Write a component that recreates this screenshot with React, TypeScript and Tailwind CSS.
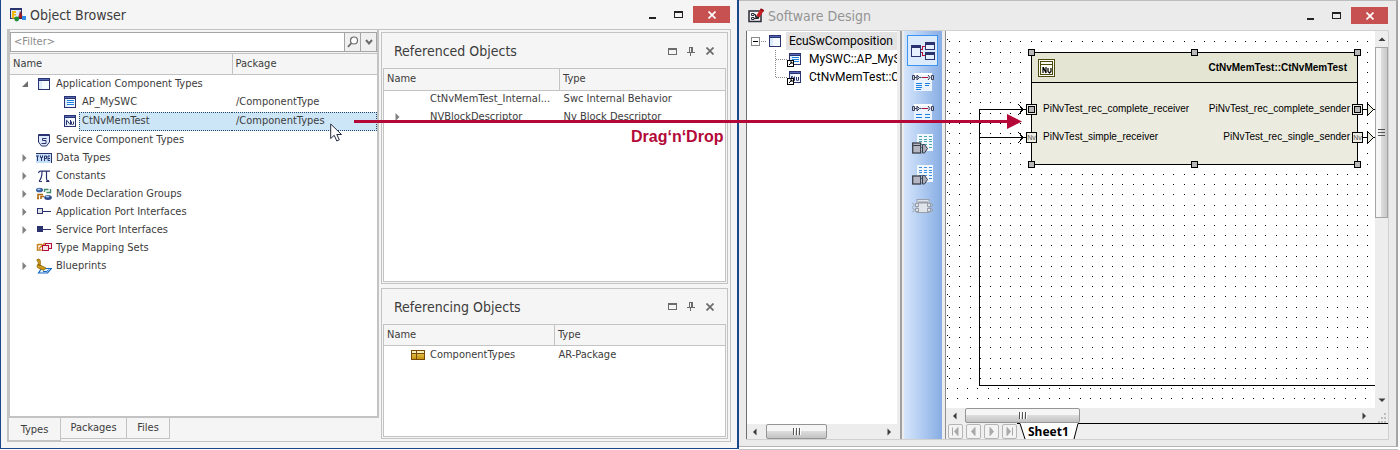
import React from 'react';

type IconProps = { className?: string };

const NAVY = '#2b3270';

function Svg({ w, h, children, className }: { w: number; h: number; children: React.ReactNode; className?: string }) {
  return (
    <svg width={w} height={h} viewBox={`0 0 ${w} ${h}`} className={`shrink-0 ${className ?? ''}`} aria-hidden="true">
      {children}
    </svg>
  );
}

function WindowShape() {
  return (
    <g shapeRendering="crispEdges">
      <rect x="2" y="2" width="12" height="12" fill={NAVY} />
      <rect x="3" y="5" width="10" height="8" fill="#f4f9ff" />
      <rect x="3" y="3" width="10" height="1" fill="#5468b8" />
      <rect x="3" y="5" width="3" height="8" fill="#dcebfb" />
    </g>
  );
}

function WindowIcon() {
  return (
    <Svg w={16} h={16}>
      <WindowShape />
    </Svg>
  );
}

function ListWindowIcon() {
  return (
    <Svg w={16} h={16}>
      <WindowShape />
      <path d="M5 6.500h7M5 8.500h7M5 10.500h7" stroke="#1d7fe0" shapeRendering="crispEdges" />
    </Svg>
  );
}

function NvWindowIcon() {
  return (
    <Svg w={16} h={16}>
      <WindowShape />
      <path d="M4.500 12V7.500h.5l3 4h.5V7M9.500 8.500v2.500l1 1 1-1V8.500" stroke={NAVY} fill="none" />
    </Svg>
  );
}

function ShieldIcon() {
  return (
    <Svg w={16} h={16}>
      <path d="M2.500 2.500h11v7.500l-3 4h-5l-3-4z" fill="#dbe9fb" stroke={NAVY} />
      <path d="M3 3.500h10" stroke={NAVY} />
      <path d="M10.500 6.500h-4v2h3.500v3H5.500" stroke={NAVY} fill="none" />
    </Svg>
  );
}

function TypeIcon() {
  return (
    <Svg w={16} h={16}>
      <g shapeRendering="crispEdges">
        <rect x="0" y="4" width="16" height="9" fill="#c4e0f9" />
        <path d="M0 3.500h16M15.500 3v10" stroke={NAVY} fill="none" />
      </g>
      <path
        d="M0 6h3M1.500 6v5M4.500 5.500v2h2v-2M5.500 7.500V11M8.500 11V6h2v2.500h-2M14 6h-2v4.500h2M12 8.500h2"
        stroke={NAVY}
        fill="none"
      />
    </Svg>
  );
}

function PiIcon() {
  return (
    <Svg w={16} h={16}>
      <path d="M2.500 5q.5-1.800 2-1.800h9.500M6 3.500c0 5-.5 7.500-3 9.500M10.500 3.500v7c0 2 1 2.500 2.500 2" stroke={NAVY} strokeWidth="1.200" fill="none" />
      <path d="M3 13.500h3M10 13.500h3.500" stroke={NAVY} />
    </Svg>
  );
}

function ModeIcon() {
  return (
    <Svg w={16} h={16}>
      <ellipse cx="3.500" cy="4" rx="3.500" ry="2.300" fill="#3a5f9e" />
      <ellipse cx="3" cy="3.300" rx="1.800" ry=".9" fill="#a9c4ea" />
      <path d="M8.500 6V3.500h4M10.500 6.500h4V3" stroke="#3f8a68" strokeWidth="1.400" fill="none" />
      <path d="M2 13V8.500h5M5 13V10.500h3M1 12.500h2" stroke="#b36a12" strokeWidth="1.600" fill="none" />
      <ellipse cx="12" cy="11.500" rx="3.800" ry="2.500" fill="#2e4a8c" />
      <ellipse cx="11.500" cy="10.500" rx="2" ry=".9" fill="#a9c4ea" />
    </Svg>
  );
}

function PortIcon({ filled }: { filled: boolean }) {
  return (
    <Svg w={16} h={16}>
      <g shapeRendering="crispEdges">
        <rect x="1.500" y="4.500" width="5" height="5" fill={filled ? NAVY : '#e3e3e3'} stroke={NAVY} />
        <path d="M7 7.500h8" stroke={NAVY} />
      </g>
    </Svg>
  );
}

function MappingIcon() {
  return (
    <Svg w={16} h={16}>
      <path d="M1.500 4v6h4M3 8.500l5-4.500v3.500M2 4.500h4" stroke="#c8801e" strokeWidth="1.500" fill="none" />
      <g shapeRendering="crispEdges" stroke="#b5123a" fill="#f7e3e8">
        <rect x="9.500" y="3.500" width="6" height="5" />
        <rect x="6.500" y="5.500" width="6" height="5" />
      </g>
    </Svg>
  );
}

function BlueprintIcon() {
  return (
    <Svg w={16} h={16}>
      <path d="M5.500 10.500h10l-4 4.500H2.500z" fill="#e6f1fd" stroke="#1668c4" strokeWidth="1.200" />
      <path d="M7 13.500h4l1.500-2" stroke="#1668c4" fill="none" />
      <path d="M.8 1.800Q2 .2 4 1.800L4.500 4.500 4 7l6 3-2 2.200-4-1.200-2.500-1.500L1 8l1.500-3z" fill="#cc9a1a" stroke="#8f6500" strokeWidth=".8" />
      <path d="M2 6.500l3 1" stroke="#7d5a05" />
    </Svg>
  );
}

function PackageIcon() {
  return (
    <Svg w={14} h={10}>
      <defs>
        <linearGradient id="pkg" x2="0" y2="1">
          <stop offset="0" stopColor="#f0d568" />
          <stop offset="1" stopColor="#c4920c" />
        </linearGradient>
      </defs>
      <g shapeRendering="crispEdges">
        <rect x=".5" y=".5" width="13" height="9" fill="url(#pkg)" stroke="#7a4a08" />
        <rect x="1" y="1" width="12" height="2" fill="#f9efb8" />
        <path d="M1 3.500h12M5.500 1v8" stroke="#7a4a08" />
      </g>
    </Svg>
  );
}

function AppIcon() {
  return (
    <Svg w={16} h={14}>
      <rect x=".5" y=".5" width="11" height="10" fill="#dce8fa" stroke={NAVY} />
      <path d="M1 1.500h10" stroke={NAVY} />
      <path d="M2 3h4v2H4v1h2v1.500H4V9h2v1.500H2z" fill="#f2b705" />
      <path d="M8.500 10l1.700-6.500 2.600 6.500z" fill="#b51a24" stroke="#7d0f16" strokeWidth=".6" />
      <circle cx="6.700" cy="11" r="2.400" fill="#1f8f3a" />
      <rect x="12" y="8" width="4" height="4" fill="#2f8be6" />
    </Svg>
  );
}

function DesignIcon() {
  return (
    <Svg w={17} h={15}>
      <rect x="1" y="3" width="12" height="10.500" fill="#f3f3f3" stroke="#2a2a38" strokeWidth="1.500" />
      <path d="M3.500 5.500h2.500v2H3.500zM3.500 9.500h2.500v2H3.500zM8 8h2.500v2.500H8zM6 6.500h1.500v3M6 10.500h2" stroke="#2a2a38" fill="none" />
      <path d="M10 8.500L14 2" stroke="#c81e24" strokeWidth="3.600" />
      <path d="M12.500 1l3.300 2" stroke="#8c1015" strokeWidth="1.800" />
      <path d="M7.700 11.200l.8-3.200 2.600 1.600z" fill="#222" />
    </Svg>
  );
}

function Expander({ state }: { state?: 'open' | 'closed' }) {
  return (
    <Svg w={8} h={8}>
      {state === 'open' && <path d="M7 1v6H1z" fill="#6e6e6e" />}
      {state === 'closed' && <path d="M1.500 0v8l4-4z" fill="#808080" />}
    </Svg>
  );
}

function MinimizeIcon() {
  return (
    <Svg w={9} h={12}>
      <rect x="1" y="8" width="7" height="2" fill="#222" />
    </Svg>
  );
}

function MaximizeIcon({ color = '#222' }: { color?: string }) {
  return (
    <Svg w={9} h={7}>
      <g shapeRendering="crispEdges">
        <rect x=".5" y=".5" width="8" height="6" fill="none" stroke={color} />
        <rect x="0" y="0" width="9" height="2" fill={color} />
      </g>
    </Svg>
  );
}

function CrossIcon({ color = '#fff' }: { color?: string }) {
  return (
    <Svg w={8} h={8}>
      <path d="M.5.5l7 7M7.500.5l-7 7" stroke={color} strokeWidth="1.700" />
    </Svg>
  );
}

function PinIcon() {
  return (
    <Svg w={8} h={9}>
      <path d="M2 .5h4M2.500 0v5M5.500 0v5M4.500 0v5M0 5.500h8M3.500 6v3" stroke="#6b6b6b" shapeRendering="crispEdges" />
    </Svg>
  );
}

function CaptionButtons() {
  return (
    <div className="flex items-center pr-px">
      <button type="button" aria-label="Minimize" className="flex h-4 w-6 items-center justify-center">
        <MinimizeIcon />
      </button>
      <button type="button" aria-label="Maximize" className="mr-px flex h-4 w-7 items-center justify-center">
        <MaximizeIcon />
      </button>
      <button type="button" aria-label="Close" className="flex h-[17px] w-[37px] items-center justify-center bg-[#c75050]">
        <CrossIcon />
      </button>
    </div>
  );
}

type TreeRow = {
  label: string;
  pkg?: string;
  icon: React.ReactNode;
  state?: 'open' | 'closed';
  child?: boolean;
  selected?: boolean;
};

const TREE: TreeRow[] = [
  { label: 'Application Component Types', icon: <WindowIcon />, state: 'open' },
  { label: 'AP_MySWC', pkg: '/ComponentType', icon: <ListWindowIcon />, child: true },
  { label: 'CtNvMemTest', pkg: '/ComponentTypes', icon: <NvWindowIcon />, child: true, selected: true },
  { label: 'Service Component Types', icon: <ShieldIcon /> },
  { label: 'Data Types', icon: <TypeIcon />, state: 'closed' },
  { label: 'Constants', icon: <PiIcon />, state: 'closed' },
  { label: 'Mode Declaration Groups', icon: <ModeIcon />, state: 'closed' },
  { label: 'Application Port Interfaces', icon: <PortIcon filled={false} />, state: 'closed' },
  { label: 'Service Port Interfaces', icon: <PortIcon filled />, state: 'closed' },
  { label: 'Type Mapping Sets', icon: <MappingIcon /> },
  { label: 'Blueprints', icon: <BlueprintIcon />, state: 'closed' },
];

function TypeTree() {
  return (
    <table className="w-full table-fixed border-collapse text-left">
      <colgroup>
        <col className="w-[60.500%]" />
        <col />
      </colgroup>
      <thead>
        <tr className="h-[21px] border-y border-[#c3c3c3] bg-[#f5f5f5]">
          <th className="p-0 pl-[3px] font-normal">Name</th>
          <th className="border-l border-[#c3c3c3] p-0 pl-[3px] font-normal">Package</th>
        </tr>
      </thead>
      <tbody>
        {TREE.map((r) => (
          <tr key={r.label} className={r.selected ? 'h-5' : 'h-[18px]'}>
            <td className="p-0">
              <div className={`flex items-center ${r.child ? 'pl-[52px]' : 'pl-[11px]'}`}>
                {!r.child && (
                  <span className="mr-[7px] flex">
                    <Expander state={r.state} />
                  </span>
                )}
                {r.icon}
                <span
                  className={`ml-px flex min-w-0 flex-1 items-center border-y border-l border-dotted pl-[2px] whitespace-nowrap ${
                    r.selected ? 'h-[19px] border-[#26486b] bg-[#cde6f7]' : 'h-[18px] border-transparent'
                  }`}
                >
                  {r.label}
                </span>
              </div>
            </td>
            <td className="p-0">
              <span
                className={`flex items-center border-y border-r border-dotted pl-[4px] ${
                  r.selected ? 'h-[19px] border-[#26486b] bg-[#cde6f7]' : 'h-[18px] border-transparent'
                }`}
              >
                {r.pkg}
              </span>
            </td>
          </tr>
        ))}
      </tbody>
    </table>
  );
}

type RefRow = { name: string; type: string; icon?: React.ReactNode; state?: 'closed' };

function RefPanel({ title, rows, col, className }: { title: string; rows: RefRow[]; col: string; className: string }) {
  return (
    <section className={`flex min-h-0 basis-0 flex-col border border-[#c3c3c3] p-px ${className}`}>
      <header className="flex h-[34px] shrink-0 items-center justify-between pr-[7px] pl-[11px]">
        <h2 className="text-[14px] leading-5">{title}</h2>
        <div className="flex items-center gap-[1px]">
          <button type="button" aria-label="Maximize panel" className="flex h-4 w-[18px] items-center justify-center">
            <MaximizeIcon color="#6b6b6b" />
          </button>
          <button type="button" aria-label="Pin panel" className="flex h-4 w-[18px] items-center justify-center">
            <PinIcon />
          </button>
          <button type="button" aria-label="Close panel" className="flex h-4 w-[18px] items-center justify-center">
            <CrossIcon color="#6b6b6b" />
          </button>
        </div>
      </header>
      <div className="min-h-0 flex-1 overflow-hidden border border-[#c3c3c3] bg-white">
        <table className="w-full table-fixed text-left">
          <colgroup>
            <col className={col} />
            <col />
          </colgroup>
          <thead>
            <tr className="h-[21px] bg-[#f5f5f5]">
              <th className="border-b border-[#c3c3c3] p-0 pl-[3px] font-normal">Name</th>
              <th className="border-b border-l border-[#c3c3c3] p-0 pl-[3px] font-normal">Type</th>
            </tr>
          </thead>
          <tbody>
            {rows.map((r) => (
              <tr key={r.name} className="h-[18px]">
                <td className="p-0">
                  <div className="flex items-center pl-[10px]">
                    <Expander state={r.state} />
                    <span className="mr-[5px] ml-[9px] flex w-[14px] shrink-0">{r.icon}</span>
                    <span className="whitespace-nowrap">{r.name}</span>
                  </div>
                </td>
                <td className="p-0 pl-[4px] whitespace-nowrap">{r.type}</td>
              </tr>
            ))}
          </tbody>
        </table>
      </div>
    </section>
  );
}

function ObjectBrowser() {
  return (
    <section className="flex min-w-0 flex-col border-r-2 border-b border-l border-[#1c478e] bg-[#f5f5f5] pr-[6px] pb-[6px] pl-[6px] font-['DejaVu_Sans_Condensed',sans-serif] text-[11px] leading-4 text-[#3c3c3c]">
      <header className="flex h-[29px] shrink-0 items-center pl-[3px]">
        <AppIcon />
        <h1 className="ml-[4px] flex-1 text-[14px] leading-5">Object Browser</h1>
        <CaptionButtons />
      </header>
      <div className="grid min-h-0 flex-1 grid-cols-[371fr_351fr] border border-[#c3c3c3]">
        <div className="flex min-h-0 min-w-0 flex-col">
          <div className="flex min-h-0 flex-1 flex-col border-x-2 border-b-2 border-[#c3c3c3] bg-white">
            <div className="bg-[#f5f5f5] pt-[2px] pb-px">
              <div className="flex h-5 border border-[#a5a5a5] bg-white">
                <input
                  aria-label="Filter"
                  placeholder="<Filter>"
                  className="min-w-0 flex-1 px-[3px] outline-none placeholder:text-[#8a8a8a]"
                />
                <button type="button" aria-label="Search" className="flex w-4 items-center justify-center border-l border-[#a5a5a5] bg-[#f0f0f0]">
                  <Svg w={12} h={12}>
                    <circle cx="7" cy="4.500" r="3.500" fill="#fff" stroke="#6b6b6b" strokeWidth="1.200" />
                    <path d="M4.500 7L1 10.800" stroke="#6b6b6b" strokeWidth="1.800" />
                  </Svg>
                </button>
                <button type="button" aria-label="Filter options" className="flex w-4 items-center justify-center border-l border-[#a5a5a5] bg-[#f0f0f0]">
                  <Svg w={8} h={7}>
                    <path d="M1 1l3 3.500L7 1" stroke="#6b6b6b" strokeWidth="2" fill="none" />
                  </Svg>
                </button>
              </div>
            </div>
            <TypeTree />
          </div>
          <div role="tablist" className="flex h-[23px] shrink-0 items-start">
            <button type="button" role="tab" aria-selected="true" className="h-[23px] w-[53px] border-r border-b border-l border-[#c3c3c3] pt-px">
              Types
            </button>
            <button type="button" role="tab" aria-selected="false" className="h-[21px] w-[66px] border-r border-b border-[#c3c3c3]">
              Packages
            </button>
            <button type="button" role="tab" aria-selected="false" className="h-[21px] w-[43px] border-r border-b border-[#c3c3c3]">
              Files
            </button>
          </div>
        </div>
        <div className="flex min-h-0 min-w-0 flex-col gap-1 p-[2px]">
          <RefPanel
            title="Referenced Objects"
            className="grow-[253]"
            col="w-[51.500%]"
            rows={[
              { name: 'CtNvMemTest_Internal...', type: 'Swc Internal Behavior' },
              { name: 'NVBlockDescriptor', type: 'Nv Block Descriptor', state: 'closed' },
            ]}
          />
          <RefPanel
            title="Referencing Objects"
            className="grow-[150]"
            col="w-[50%]"
            rows={[{ name: 'ComponentTypes', type: 'AR-Package', icon: <PackageIcon /> }]}
          />
        </div>
      </div>
    </section>
  );
}

function ShortcutBadge() {
  return (
    <g>
      <rect x=".5" y="9.500" width="6" height="6" fill="#fff" stroke="#000" shapeRendering="crispEdges" />
      <path d="M2 14l3-3M3 11h2v2" stroke="#000" fill="none" />
    </g>
  );
}

function CompositionTree() {
  return (
    <div className="flex w-[156px] shrink-0 flex-col border-r-2 border-l border-r-[#a0a0a0] border-l-[#6e6e6e] bg-[#ededed] pr-[3px]">
      <ul className="flex min-h-0 flex-1 flex-col overflow-hidden bg-white">
        <li className="flex h-[19px] items-center pl-1">
          <Svg w={34} h={16}>
            <g shapeRendering="crispEdges">
              <rect x=".5" y="4.500" width="8" height="8" fill="#fff" stroke="#8a8a8a" />
              <path d="M2 8.500h5" stroke="#000" />
              <path d="M10 8.500h6" stroke="#888" strokeDasharray="1 1" />
            </g>
            <g transform="translate(16 0)">
              <WindowShape />
            </g>
          </Svg>
          <span className="ml-px h-[18px] flex-1 bg-[#e3e3e3] pl-[3px] leading-[18px] whitespace-nowrap">EcuSwComposition</span>
        </li>
        {[
          { label: 'MySWC::AP_MySWC', nv: false },
          { label: 'CtNvMemTest::CtNvMemTest', nv: true },
        ].map((r) => (
          <li key={r.label} className="flex h-[18px] items-center pl-7">
            <Svg w={12} h={18}>
              <path d={r.nv ? 'M.5 0v9.500h11' : 'M.5 0v18M.5 9.500h11'} stroke="#888" strokeDasharray="1 1" fill="none" shapeRendering="crispEdges" />
            </Svg>
            <Svg w={16} h={16}>
              <WindowShape />
              {r.nv ? (
                <path d="M4.500 12V7.500l1 0 2 4V7.500M9.500 8v3l1 1 1-1V8" stroke={NAVY} fill="none" />
              ) : (
                <path d="M5 6.500h7M5 8.500h7M5 10.500h7" stroke="#1d7fe0" shapeRendering="crispEdges" />
              )}
              <ShortcutBadge />
            </Svg>
            <span className="ml-[6px] whitespace-nowrap">{r.label}</span>
          </li>
        ))}
      </ul>
      <div className="flex h-[15px] shrink-0 items-center bg-[#ededed] pr-[4px] pl-[4px]">
        <ArrowGlyph dir="left" />
        <HThumb className="ml-[7px] w-[61px]" />
        <span className="flex-1" />
        <ArrowGlyph dir="right" />
      </div>
    </div>
  );
}

function ArrowGlyph({ dir }: { dir: 'left' | 'right' | 'up' | 'down' }) {
  const d = {
    left: 'M5.500 0.500v7L2 4z',
    right: 'M2.500 0.500v7L6 4z',
    up: 'M.5 6h7L4 2.500z',
    down: 'M.5 2.500h7L4 6z',
  }[dir];
  return (
    <Svg w={8} h={8}>
      <path d={d} fill="#3c3c3c" />
    </Svg>
  );
}

function HThumb({ className }: IconProps) {
  return (
    <span
      className={`flex h-[15px] items-center justify-center rounded-[2px] border border-[#959595] bg-linear-to-b from-[#f5f5f5] from-45% via-[#dcdcdc] via-50% to-[#c3c3c3] ${className ?? ''}`}
    >
      <Svg w={8} h={7}>
        <path d="M.5 0v7M3.500 0v7M6.500 0v7" stroke="#555" shapeRendering="crispEdges" />
        <path d="M1.500 0v7M4.500 0v7M7.500 0v7" stroke="#fff" shapeRendering="crispEdges" />
      </Svg>
    </span>
  );
}

function LinkedWindows() {
  return (
    <Svg w={26} h={20}>
      <g shapeRendering="crispEdges">
        <rect x="1" y="4" width="10" height="12" fill={NAVY} />
        <rect x="2" y="7" width="8" height="8" fill="#e6f1fd" />
        <rect x="15" y="1" width="10" height="8" fill={NAVY} />
        <rect x="16" y="4" width="8" height="4" fill="#e6f1fd" />
        <rect x="15" y="11" width="10" height="8" fill={NAVY} />
        <rect x="16" y="14" width="8" height="4" fill="#e6f1fd" />
        <path d="M11 8.500h1.500v-3h2.500M11 11.500h1.500v3h2.500" stroke="#b5123a" fill="none" />
      </g>
    </Svg>
  );
}

function PortConnect({ rows }: { rows: number }) {
  return (
    <Svg w={22} h={20}>
      <g shapeRendering="crispEdges">
        <rect x="2" y="1" width="18" height="18" fill="#eaf3fe" />
        <rect x="2" y="1" width="18" height="2" fill="#fff" />
        {rows === 4 ? (
          <path d="M4 11.500h6M4 13.500h6M4 15.500h6M4 17.500h5M13 11.500h5M13 13.500h4" stroke="#1d7fe0" />
        ) : (
          <path d="M4 11.500h6M4 14.500h6M4 17.500h6M13 11.500h5M13 14.500h5M13 17.500h4" stroke="#1d7fe0" />
        )}
        <path d="M10 5.500h7" stroke="#b5123a" />
      </g>
      <path
        d="M.5 3.500h2v4h-2zM5 3l2.500 2.500L5 8zM3 5.500h2M7.500 5.500h2M21.500 3.500h-2v4h2zM16 3l2 2.500-2 2.500"
        fill="#c9cedd"
        stroke="#3a3f5c"
      />
    </Svg>
  );
}

function DelegatePort({ tinted }: { tinted: boolean }) {
  return (
    <Svg w={22} h={20}>
      <g shapeRendering="crispEdges">
        <rect x="5" y="0" width="16" height="17" fill="#f1f7ff" />
        {[2.5, 5.5, 7.5, 10.5, 13.5].map((y) => (
          <path key={y} d={`M7 ${y}h3M12 ${y}h3M17 ${y}h3`} stroke={tinted ? '#4aa8b0' : '#3f8fe0'} />
        ))}
      </g>
      <rect x=".7" y={tinted ? 9 : 11} width="8" height={tinted ? 10 : 8} fill="#b4b7c2" stroke="#3a3f4c" strokeWidth="1.300" />
      {tinted && <path d="M1 11.500h8" stroke="#3a3f4c" />}
      <path d="M10.500 10.500h2l3 4-3 4.500h-2z" fill="#a9acb8" stroke="#3a3f4c" />
    </Svg>
  );
}

function DisabledComponent() {
  return (
    <Svg w={22} h={16}>
      <g fill="#dfe3ea" stroke="#9aa0ab">
        <rect x="5" y="1.500" width="12" height="13" />
        <path d="M6 4.500h10" strokeWidth="2" />
        <rect x="3.500" y="5.500" width="3" height="3" />
        <rect x="3.500" y="10.500" width="3" height="3" />
        <rect x="15.500" y="5.500" width="3" height="3" />
        <rect x="15.500" y="10.500" width="3" height="3" />
        <path d="M0 4.500l2.500 2.500L0 9.500M0 9.500l2.500 2.500L0 14.500M19 5l2 2-2 2M19 10l2 2-2 2" fill="none" />
      </g>
    </Svg>
  );
}

function Toolbar() {
  const tools = [
    { label: 'Connect ports', icon: <PortConnect rows={4} /> },
    { label: 'Connect port prototypes', icon: <PortConnect rows={3} /> },
    { label: 'Delegate provided port', icon: <DelegatePort tinted /> },
    { label: 'Delegate port', icon: <DelegatePort tinted={false} /> },
    { label: 'Component', icon: <DisabledComponent /> },
  ];
  return (
    <div className="flex shrink-0 border-r border-[#8f8f8f] bg-[#ededed] pr-[3px] pl-[2px]">
      <div role="toolbar" className="flex w-[38px] flex-col items-center bg-linear-to-r from-[#d6e6fb] to-[#87ade4] pt-[4px]">
        <button type="button" aria-label="Show composition" className="-ml-px flex h-[31px] w-[31px] items-center justify-center border border-[#3a94f0] bg-[#dcebfc]">
          <LinkedWindows />
        </button>
        {tools.map((t) => (
          <button key={t.label} type="button" aria-label={t.label} className="-ml-px flex h-[31px] w-[31px] items-center justify-center">
            {t.icon}
          </button>
        ))}
      </div>
    </div>
  );
}

const CANVAS_X = 946;
const CANVAS_Y = 31;

function gridDots() {
  let d = '';
  const dot = (x: number, y: number) => {
    d += `M${x - CANVAS_X} ${y - CANVAS_Y}h1v1h-1z`;
  };
  for (let r = 0; r < 34; r++) {
    const y = 41 + Math.floor(10.2 * r + 0.8);
    dot(947, y - 2);
    for (let c = 0; c < 42; c++) dot(949 + Math.floor(10.2 * c + 0.6), y);
  }
  for (const y of [388, 398]) {
    for (let c = 0; c < 42; c++) dot(947 + Math.floor(10.2 * c + 0.4), y);
  }
  return d;
}

const DOTS = gridDots();

function Handle({ className }: IconProps) {
  return <span className={`absolute h-[7px] w-[7px] border border-black bg-[#b9b9b9] ${className ?? ''}`} />;
}

function PortBox({ nv, className }: { nv: boolean; className?: string }) {
  return (
    <span className={`absolute flex h-[11px] w-[11px] items-center justify-center border border-black bg-[#ecebdf] ${className ?? ''}`}>
      {nv ? <span className="text-[7px] leading-none text-[#555]">Nv</span> : <span className="h-[7px] w-[7px] border border-black bg-[#b9b9b9]" />}
    </span>
  );
}

function ComponentNode() {
  return (
    <article className="absolute top-[21px] left-[85px] h-[113px] w-[327px] border border-black bg-[#ecebdf] font-['Liberation_Sans',sans-serif] text-black">
      <header className="flex h-[30px] items-center justify-between border-b border-black bg-[#e4e5d2] pr-[10px] pl-[6px]">
        <Svg w={17} h={18}>
          <g shapeRendering="crispEdges" fill="#fdfdf5" stroke="#4a4a0c">
            <rect x=".5" y=".5" width="16" height="17" />
            <rect x="2.500" y="2.500" width="12" height="13" />
            <path d="M3 5.500h12" />
          </g>
          <path d="M5 14V8.500h.5L8 14V8M10 9v3.500l1.500 1.500L13 12.500V9" stroke="#000" strokeWidth="1.200" fill="none" />
        </Svg>
        <h3 className="text-[10px] font-bold">CtNvMemTest::CtNvMemTest</h3>
      </header>
      <div className="flex flex-col gap-3 pt-[18px] pr-[7px] pl-[11px] text-[10px] leading-4">
        <div className="flex justify-between">
          <span>PiNvTest_rec_complete_receiver</span>
          <span>PiNvTest_rec_complete_sender</span>
        </div>
        <div className="flex justify-between">
          <span>PiNvTest_simple_receiver</span>
          <span>PiNvTest_rec_single_sender</span>
        </div>
      </div>
      <Handle className="-top-1 -left-1" />
      <Handle className="-top-1 left-[159px]" />
      <Handle className="-top-1 -right-1" />
      <Handle className="-bottom-1 -left-1" />
      <Handle className="-bottom-1 left-[159px]" />
      <Handle className="-right-1 -bottom-1" />
      <PortBox nv={false} className="top-[51px] -left-[6px]" />
      <PortBox nv className="top-[79px] -left-[6px]" />
      <PortBox nv={false} className="top-[51px] -right-[6px]" />
      <PortBox nv className="top-[79px] -right-[6px]" />
    </article>
  );
}

function Canvas() {
  return (
    <div className="relative min-w-0 flex-1 overflow-hidden bg-white">
      <svg width="429" height="376" viewBox="0 0 429 376" className="absolute top-0 left-0" shapeRendering="crispEdges" aria-label="Design sheet">
        <path d={DOTS} fill="#000" />
        <path d="M33.500 355V78.500H80M33.500 106.500H80M33 354.500h396" stroke="#000" fill="none" />
        <path d="M72 73l5 5.500-5 5.500M72 101l5 5.500-5 5.500" stroke="#000" fill="none" />
        <path d="M417 78.500h4M428 78.500h1M417 106.500h4M428 106.500h1" stroke="#000" />
        <path d="M421.500 72.500v12l6-6zM421.500 100.500v12l6-6z" stroke="#000" fill="#ecebdf" />
      </svg>
      <ComponentNode />
    </div>
  );
}

function SheetBar() {
  const nav = [
    { label: 'First sheet', d: 'M3.500 2.500v8M9 2.500v8L5.500 6.500z' },
    { label: 'Previous sheet', d: 'M8 2.500v8L4.500 6.500z' },
    { label: 'Next sheet', d: 'M5 2.500v8L8.500 6.500z' },
    { label: 'Last sheet', d: 'M4 2.500v8L7.500 6.500zM9.500 2.500v8' },
  ];
  return (
    <div className="flex h-4 shrink-0 items-end bg-[#efefef]">
      <div className="flex gap-[3px] pl-[2px]">
        {nav.map((n) => (
          <button key={n.label} type="button" aria-label={n.label} className="flex h-[15px] w-[15px] items-center justify-center rounded-[2px] border border-[#b5b5b5] bg-[#f3f3f3]">
            <Svg w={13} h={13}>
              <path d={n.d} fill="#a8a8a8" stroke="#a8a8a8" />
            </Svg>
          </button>
        ))}
      </div>
      <button type="button" className="flex h-4 items-end">
        <Svg w={11} h={16}>
          <path d="M0 .5h3" stroke="#000" />
          <path d="M3 0l5 16h3V0z" fill="#fff" />
          <path d="M3 .5l5 15.500" stroke="#000" />
        </Svg>
        <span className="h-4 bg-white font-['Noto_Sans',sans-serif] text-[12px] leading-[18px] font-bold text-black">Sheet1</span>
        <Svg w={10} h={16}>
          <path d="M0 0h9L5 16H0z" fill="#fff" />
          <path d="M10 .5H9L5 16" stroke="#000" fill="none" />
        </Svg>
      </button>
      <span className="h-4 flex-1 border-t border-black" />
    </div>
  );
}

function SoftwareDesign() {
  return (
    <section className="flex min-w-0 flex-col bg-[#ebebeb]">
      <div className="flex min-h-0 flex-1 flex-col border-t border-r-2 border-b border-t-[#bdbdbd] border-r-[#a5a5a5] border-b-[#b5b5b5] pr-[7px] pb-[6px] pl-[7px]">
        <header className="flex h-[29px] shrink-0 items-center pl-[2px]">
          <DesignIcon />
          <h1 className="ml-[3px] flex-1 font-['DejaVu_Sans_Condensed',sans-serif] text-[14px] leading-5 text-[#949494]">Software Design</h1>
          <CaptionButtons />
        </header>
        <div className="flex min-h-0 flex-1 border-t border-r border-b border-[#d0d0d0] font-['Roboto',sans-serif] text-[12px] text-black">
          <CompositionTree />
          <Toolbar />
          <div className="flex min-w-0 flex-1 flex-col">
            <div className="flex min-h-0 flex-1">
              <Canvas />
              <div className="flex w-[13px] shrink-0 flex-col items-center bg-[#ededed] py-1">
                <ArrowGlyph dir="up" />
                <span className="mt-1 flex h-[171px] w-[13px] items-center justify-center border border-[#a5a5a5] bg-linear-to-r from-[#f5f5f5] from-45% via-[#dcdcdc] via-50% to-[#c9c9cc]">
                  <Svg w={7} h={8}>
                    <path d="M0 .5h7M0 3.500h7M0 6.500h7" stroke="#555" shapeRendering="crispEdges" />
                  </Svg>
                </span>
                <span className="flex-1" />
                <ArrowGlyph dir="down" />
              </div>
            </div>
            <div className="flex h-[15px] shrink-0 items-center bg-[#ededed]">
              <span className="ml-[5px] flex">
                <ArrowGlyph dir="left" />
              </span>
              <HThumb className="ml-[6px] w-[115px]" />
              <span className="flex-1" />
              <ArrowGlyph dir="right" />
              <Svg w={20} h={15}>
                <path d="M16 5h2v2h-2zM13 9h2v2h-2zM16 9h2v2h-2zM10 13h2v2h-2zM13 13h2v2h-2zM16 13h2v2h-2z" fill="#bdbdbd" />
              </Svg>
            </div>
            <SheetBar />
          </div>
        </div>
      </div>
      <div className="h-[3px] shrink-0 border-b border-[#c3c3c3] bg-white" />
    </section>
  );
}

export default function App() {
  return (
    <main className="relative flex h-screen min-h-[450px] bg-[#fafafa] pr-[2px]">
      <div className="grid min-w-0 flex-1 grid-cols-[739fr_659fr] grid-rows-[minmax(0,1fr)]">
        <div className="grid min-w-0 pb-px">
          <ObjectBrowser />
        </div>
        <SoftwareDesign />
      </div>
      <svg width="668" height="16" viewBox="0 0 668 16" className="absolute top-[114px] left-[354px]" aria-hidden="true">
        <path d="M0 6h655v3H0z" fill="#b30838" />
        <path d="M653 0l15 7.500-15 7.500z" fill="#b30838" />
      </svg>
      <p className="absolute top-[127px] left-[631px] font-['Liberation_Sans',sans-serif] text-[16px] leading-5 font-bold text-[#b30838]">
        Drag‘n‘Drop
      </p>
      <svg width="13" height="20" viewBox="0 0 13 20" className="absolute top-[123px] left-[330px]" aria-hidden="true">
        <path d="M.7 1v14.500l3.500-3.200 2.600 5.700 2.500-1.200-2.500-5.300h4.700z" fill="#fff" stroke="#222a3c" />
      </svg>
    </main>
  );
}
